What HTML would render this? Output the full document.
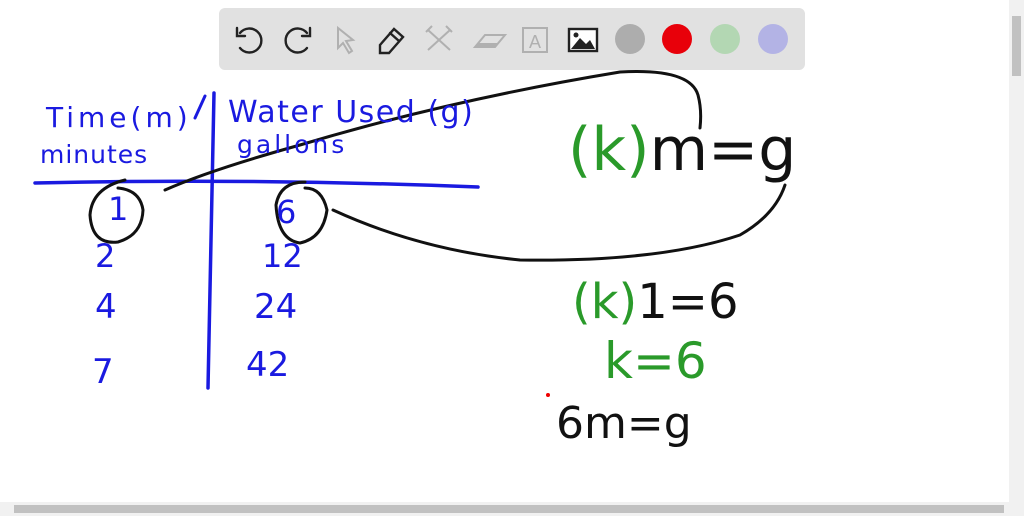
<!DOCTYPE html>
<html><head><style>
body{margin:0;width:1024px;height:516px;background:#fff;overflow:hidden;position:relative;font-family:"Liberation Sans",sans-serif}
.tb{position:absolute;left:219px;top:8px;width:586px;height:62px;background:#e1e1e1;border-radius:6px}
.c{position:absolute;top:24px;width:30px;height:30px;border-radius:50%}
.h{position:absolute;font-family:"DejaVu Sans",sans-serif;white-space:nowrap;line-height:1}
.b{color:#1a1ae0}.g{color:#2a9a2a}.k{color:#111}
</style></head><body>
<div class="tb"></div>
<svg style="position:absolute;left:0;top:0" width="1024" height="516">
<g fill="none" stroke="#222" stroke-width="2.4" stroke-linecap="round">
<path d="M240 33 A12 12 0 1 1 240 48"/><path d="M237 28 L237 36 L245 36"/>
<path d="M307 33 A12 12 0 1 0 307 48"/><path d="M310 28 L310 36 L302 36"/>
<path d="M380 45 L394 29 L403 37 L389 53 L380 53 Z"/><path d="M390 33 L399 41"/>
</g>
<g fill="none" stroke="#b0b0b0" stroke-width="2">
<path d="M338 28 L338 48 L343 43 L349 53 L352 51 L346 41 L353 40 Z"/>
<path d="M428 30 L450 50 M450 30 L428 50 M426 32 L432 26 M446 26 L452 32"/>
<path d="M475 47 L485 35 L505 35 L495 47 Z"/>
<rect x="523" y="28" width="24" height="24"/>
</g>
<path d="M478 43 L499 43 L495 47 L475 47 Z" fill="#b0b0b0"/>
<text x="535" y="48" font-size="18" fill="#b0b0b0" text-anchor="middle" font-family="Liberation Sans">A</text>
<rect x="569" y="29" width="28" height="22" fill="#fff" stroke="#222" stroke-width="2.4"/>
<path d="M571 49 L580 38 L586 44 L590 40 L595 49 Z" fill="#222"/><circle cx="576" cy="35" r="2.5" fill="#222"/>
<g fill="none" stroke-linecap="round">
<path d="M35 183 Q250 178 478 187" stroke="#1a1ae0" stroke-width="3.5"/>
<path d="M214 93 Q211 240 208 388" stroke="#1a1ae0" stroke-width="3.5"/>
<path d="M195 118 L205 96" stroke="#1a1ae0" stroke-width="3"/>
<path d="M165 190 Q210 170 300 145 Q450 100 620 72 Q690 68 698 95 Q702 110 700 128" stroke="#111" stroke-width="3"/>
<path d="M333 210 Q420 250 520 260 Q660 262 740 235 Q775 215 785 185" stroke="#111" stroke-width="3"/>
<path d="M125 180 Q92 188 90 215 Q92 245 118 242 Q142 235 143 210 Q140 190 118 188" stroke="#111" stroke-width="3"/>
<path d="M305 182 Q280 182 276 205 Q278 240 300 243 Q323 238 327 210 Q322 188 305 188" stroke="#111" stroke-width="3"/>
</g>
<circle cx="548" cy="395" r="2" fill="#e00"/>
</svg>
<div class="c" style="left:615px;background:#adadad"></div>
<div class="c" style="left:662px;background:#e8000a"></div>
<div class="c" style="left:710px;background:#b3d7b3"></div>
<div class="c" style="left:758px;background:#b3b3e5"></div>

<div class="h b" style="left:46px;top:104px;font-size:28px;letter-spacing:4px">Time(m)</div>
<div class="h b" style="left:40px;top:142px;font-size:25px;letter-spacing:1px">minutes</div>
<div class="h b" style="left:228px;top:98px;font-size:30px;letter-spacing:1.5px">Water Used (g)</div>
<div class="h b" style="left:237px;top:132px;font-size:25px;letter-spacing:3px">gallons</div>
<div class="h b" style="left:108px;top:193px;font-size:32px">1</div>
<div class="h b" style="left:276px;top:196px;font-size:32px">6</div>
<div class="h b" style="left:95px;top:240px;font-size:32px">2</div>
<div class="h b" style="left:262px;top:240px;font-size:32px">12</div>
<div class="h b" style="left:95px;top:290px;font-size:34px">4</div>
<div class="h b" style="left:254px;top:290px;font-size:34px">24</div>
<div class="h b" style="left:92px;top:355px;font-size:34px">7</div>
<div class="h b" style="left:246px;top:348px;font-size:34px">42</div>

<div class="h" style="left:568px;top:120px;font-size:60px"><span class="g">(k)</span><span class="k">m=g</span></div>
<div class="h" style="left:572px;top:278px;font-size:48px"><span class="g">(k)</span><span class="k">1=6</span></div>
<div class="h g" style="left:604px;top:336px;font-size:50px">k=6</div>
<div class="h k" style="left:556px;top:402px;font-size:44px">6m=g</div>

<div style="position:absolute;right:0;top:0;width:15px;height:502px;background:#f1f1f1"></div>
<div style="position:absolute;right:3px;top:16px;width:9px;height:60px;background:#c1c1c1"></div>
<div style="position:absolute;left:0;bottom:0;width:1024px;height:14px;background:#f1f1f1"></div>
<div style="position:absolute;left:14px;bottom:3px;width:990px;height:8px;background:#c1c1c1"></div>
</body></html>
